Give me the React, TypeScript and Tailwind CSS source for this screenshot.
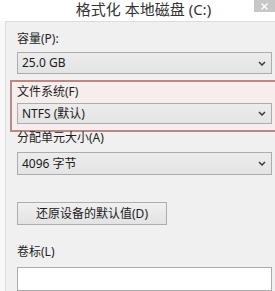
import React from "react"

const font = { fontFamily: '"Noto Sans", "Noto Sans CJK SC", sans-serif' }

const Chevron = () => (
	<svg width="8" height="5" viewBox="0 0 8 5" className="shrink-0">
		<path d="M1 1l3 3 3-3" fill="none" stroke="#3c3c3c" strokeWidth="1.5" />
	</svg>
)

const Select = ({ value, h }: { value: string; h: string }) => (
	<div className={`${h} flex items-center justify-between border border-[#acacac] bg-gradient-to-b from-[#ececec] to-[#e4e4e4] pl-[4px] pr-[5px] text-[12px] text-[#1b1b1b]`}>
		<span>{value}</span>
		<Chevron />
	</div>
)

const Label = ({ text, className = "" }: { text: string; className?: string }) => (
	<div className={`h-[16px] leading-[16px] text-[12px] text-[#1e1e1e] ${className}`}>{text}</div>
)

export default function App() {
	return (
		<div className="relative w-[275px] h-[291px] overflow-hidden bg-white" style={font}>
			{/* title bar */}
			<div className="relative h-[21px] flex items-center justify-center pl-[12px] bg-white">
				<span className="text-[15px] leading-[17px] text-[#333333] -mt-[3px]">格式化 本地磁盘 (C:)</span>
				<div className="absolute right-0 top-0 w-[21px] h-[12px] bg-[#c7c7c7] flex items-center justify-center">
					<svg width="7" height="7" viewBox="0 0 7 7">
						<path d="M0.5 0.5l6 6M6.5 0.5l-6 6" stroke="#fff" strokeWidth="1.4" />
					</svg>
				</div>
			</div>

			<div className="flex h-[270px]">
				<div className="w-[5px] shrink-0 bg-[#f8f8f8]" />
				<div className="w-[270px] shrink-0 flex flex-col items-start border-l border-t border-[#dcdcdc] bg-[#f0f0f0] pl-[11px] pt-[9px]">
					<Label text="容量(P):" />
					<div className="mt-[5px] w-[255px]">
						<Select value="25.0 GB" h="h-[22px]" />
					</div>

					{/* highlighted group */}
					<div className="mt-[6px] -ml-[7px] w-[275px] shrink-0 border-2 border-[#b68a86] bg-[#f6eeed] pl-[5px] pt-[2px] pb-[6px]">
						<Label text="文件系统(F)" />
						<div className="mt-[3px] w-[255px]">
							<Select value="NTFS (默认)" h="h-[21px]" />
						</div>
					</div>

					<Label text="分配单元大小(A)" className="-mt-[2px]" />
					<div className="mt-[6px] w-[255px]">
						<Select value="4096 字节" h="h-[23px]" />
					</div>

					<button className="mt-[27px] w-[150px] h-[23px] border border-[#adadad] bg-gradient-to-b from-[#f0f0f0] to-[#e3e3e3] text-[12px] text-[#1b1b1b] flex items-center justify-center">
						还原设备的默认值(D)
					</button>

					<Label text="卷标(L)" className="mt-[19px]" />
					<div className="mt-[7px] w-[255px] h-[24px] shrink-0 border border-[#ababab] bg-white" />
				</div>
			</div>
		</div>
	)
}
